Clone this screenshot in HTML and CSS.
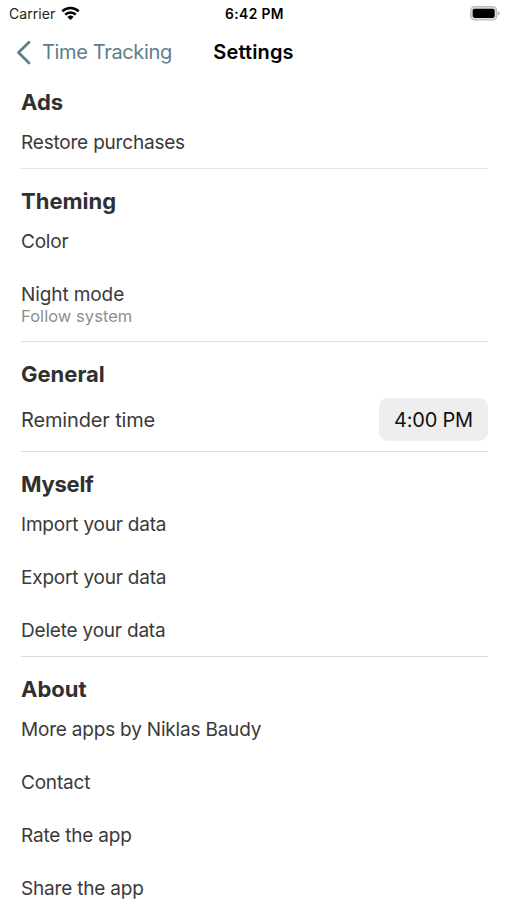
FILE: index.html
```html
<!DOCTYPE html>
<html lang="en">
<head>
<meta charset="utf-8">
<title>Settings</title>
<link rel="stylesheet" href="styles.css">
</head>
<body>
<header>
  <div class="status">
    <div class="carrier"><span>Carrier</span>
      <svg width="19" height="15" viewBox="0 0 19 15"><path d="M1.3 5.4a11.7 11.7 0 0 1 16.4 0M4.2 8.6a7.6 7.6 0 0 1 10.6 0" fill="none" stroke="#000" stroke-width="2.5"/><path d="M6.4 10.9a4.4 4.4 0 0 1 6.2 0L9.5 14z"/></svg>
    </div>
    <span class="clock">6:42 PM</span>
    <svg class="battery" width="30" height="15" viewBox="0 0 30 15"><rect x=".7" y=".7" width="26" height="13.2" rx="4" fill="#ddd" stroke="#bbb" stroke-width="1.3"/><rect x="2.7" y="2.7" width="22" height="9.2" rx="1.8"/><path d="M28 5q3.2 2.3 0 4.6z" fill="#aaa"/></svg>
  </div>
  <nav class="nav">
    <a class="back"><svg width="15" height="26" viewBox="0 0 15 26"><path d="M13 2.3L2.5 12.5 13 23" fill="none" stroke="currentColor" stroke-width="2.8" stroke-linecap="round" stroke-linejoin="round"/></svg><span>Time Tracking</span></a>
    <h1>Settings</h1>
  </nav>
</header>
<main>
  <section><h2>Ads</h2><div class="row"><span>Restore purchases</span></div></section>
  <section><h2>Theming</h2><div class="row"><span>Color</span></div><div class="row stacked"><span>Night mode</span><small>Follow system</small></div></section>
  <section><h2>General</h2><div class="row reminder"><span>Reminder time</span><button>4:00 PM</button></div></section>
  <section><h2 class="tight">Myself</h2><div class="row"><span>Import your data</span></div><div class="row"><span>Export your data</span></div><div class="row last"><span>Delete your data</span></div></section>
  <section><h2>About</h2><div class="row"><span>More apps by Niklas Baudy</span></div><div class="row"><span>Contact</span></div><div class="row"><span>Rate the app</span></div><div class="row"><span>Share the app</span></div></section>
</main>
</body>
</html>
```
FILE: styles.css
```css
* { box-sizing: border-box; }
body { margin: 0; height: 900px; overflow: hidden; background: #fff; color: #303030; font-family: Inter, sans-serif; }
.status { height: 27px; padding: 0 7px 0 9px; display: grid; grid-template-columns: 1fr auto 1fr; align-items: center; color: #000; }
.carrier { display: flex; align-items: center; gap: 6px; font-size: 14px; letter-spacing: .05px; color: #222; }
.carrier svg { margin-top: -1px; }
.clock { font-weight: 600; font-size: 13.8px; letter-spacing: .4px; }
.battery { justify-self: end; margin-top: -1px; }
.nav { height: 51px; padding: 0 16px; display: grid; grid-template-columns: 1fr auto 1fr; align-items: center; }
.back { display: flex; align-items: center; gap: 11px; color: #607d8b; font-size: 20px; white-space: nowrap; letter-spacing: -.35px; }
.back span, h1 { line-height: 24px; padding-bottom: 1px; }
h1 { margin: 0; font-size: 20px; font-weight: 600; color: #000; letter-spacing: .15px; }
main { padding: 0 19px 0 21px; }
section { border-bottom: 1px solid #ddd; padding-top: 15px; }
section:first-child { padding-top: 6px; border-color: #e4e4e4; }
section:last-child { border-bottom: 0; }
h2 { margin: 0; height: 31px; line-height: 34px; font-size: 22px; font-weight: 700; letter-spacing: 0; }
section:first-child h2 { line-height: 36px; }
.tight { letter-spacing: -.25px; }
.row { height: 53px; display: flex; align-items: center; font-size: 19px; letter-spacing: -.2px; color: #3a3a3a; }
.row > span { line-height: 23px; }
section:first-child .row > span { padding-top: 2px; }
.last { height: 52px; padding-top: 1px; }
.stacked { height: 73px; padding-top: 15px; flex-direction: column; align-items: flex-start; letter-spacing: -.1px; }
small { font-size: 16.5px; line-height: 21px; color: #8f8f8f; letter-spacing: .05px; }
.reminder { justify-content: space-between; height: 63px; font-size: 20px; letter-spacing: -.15px; }
.reminder > span { padding-top: 2px; }
button { border: 0; border-radius: 9px; width: 109px; height: 43px; background: #eee; color: #111; font: 20px Inter, sans-serif; letter-spacing: -.2px; padding: 0; }
```
